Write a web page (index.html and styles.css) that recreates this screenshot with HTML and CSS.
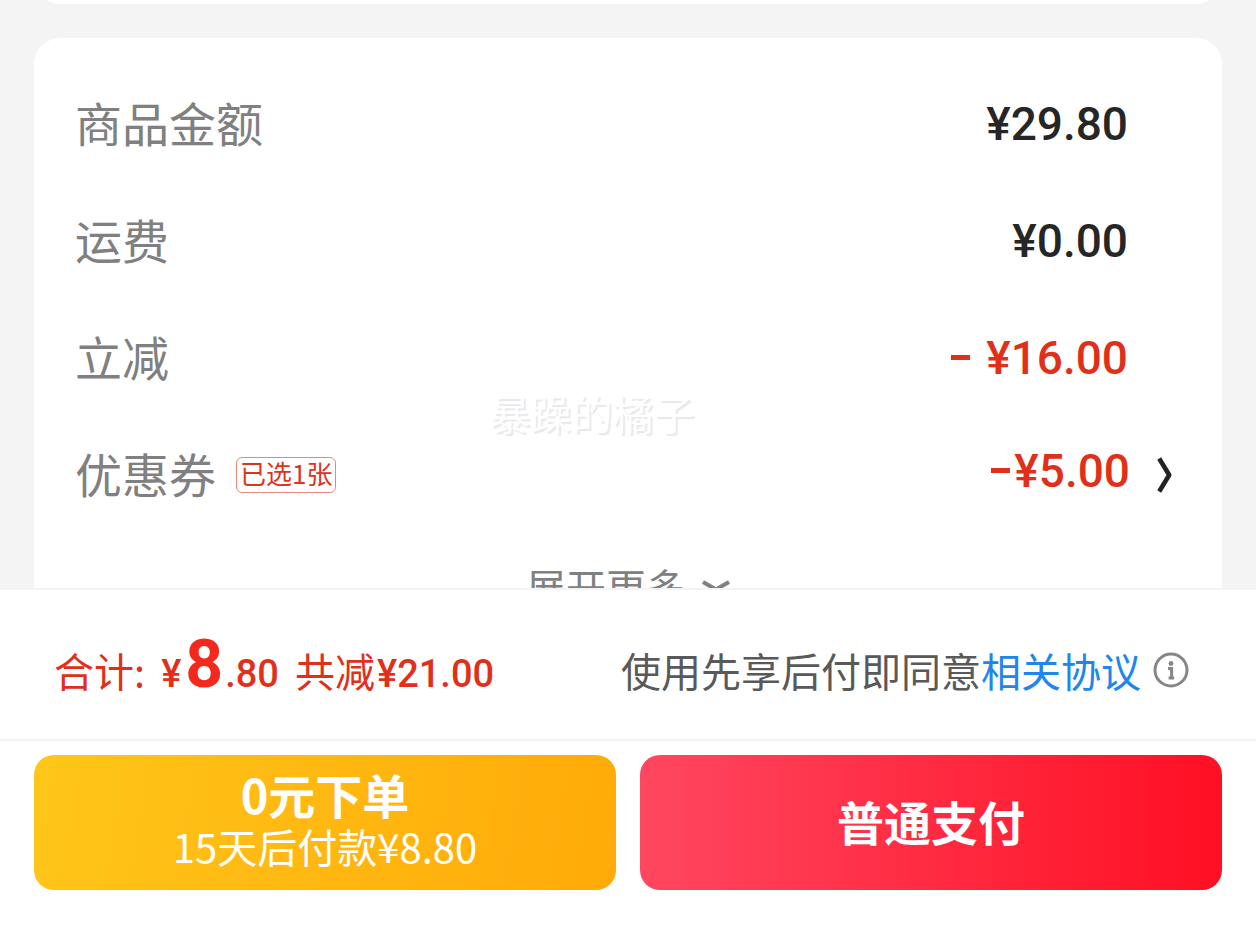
FILE: index.html
```
<!DOCTYPE html>
<html lang="zh-CN">
<head>
    <meta charset="UTF-8">
    <meta name="viewport" content="width=device-width, initial-scale=1.0">
    <title>确认订单</title>
    <link rel="stylesheet" href="styles.css">
</head>
<body>

    <main class="content">
        <div class="card card-prev"></div>

        <div class="card">
            <div class="row">
                <span class="label">商品金额</span>
                <span class="price">¥29.80</span>
            </div>
            <div class="row">
                <span class="label">运费</span>
                <span class="price">¥0.00</span>
            </div>
            <div class="row">
                <span class="label">立减</span>
                <span class="price red"><span class="minus"></span>¥16.00</span>
            </div>
            <div class="row coupon">
                <span class="label">优惠券</span>
                <span class="tag">已选1张</span>
                <span class="price red"><span class="minus"></span>¥5.00</span>
                <button type="button" class="arrow" aria-label="优惠券">
                    <svg width="16" height="36" viewBox="0 0 16 36" fill="none" stroke="#222" stroke-width="4.6" stroke-linejoin="round">
                        <path d="M2.2 1.5L12.2 18L2.2 34.5"/>
                    </svg>
                </button>
            </div>
            <button type="button" class="more">
                展开更多
                <svg width="28" height="16" viewBox="0 0 28 16" fill="none" stroke="#808080" stroke-width="4">
                    <path d="M1 4L14 11.5L27 4"/>
                </svg>
            </button>
            <span class="watermark">暴躁的橘子</span>
        </div>
    </main>

    <footer>
        <div class="summary">
            <p class="total">
                <span>合计:</span>
                <span class="amount">¥<b>8</b>.80</span>
                <span>共减<span class="num">¥21.00</span></span>
            </p>
            <p class="agree">
                使用先享后付即同意<a href="#">相关协议</a>
                <svg class="info" width="36" height="36" viewBox="0 0 36 36">
                    <circle cx="18" cy="18" r="16" fill="none" stroke="#868686" stroke-width="3"/>
                    <circle cx="18" cy="11.5" r="2.4" fill="#868686"/>
                    <path d="M15 16.4h3.6v10M15.6 26h5.6" fill="none" stroke="#868686" stroke-width="3"/>
                </svg>
            </p>
        </div>
        <div class="actions">
            <button type="button" class="btn later">
                <strong>0元下单</strong>
                <span>15天后付款¥8.80</span>
            </button>
            <button type="button" class="btn pay"><strong>普通支付</strong></button>
        </div>
    </footer>

</body>
</html>
```
FILE: styles.css
```
* {
    box-sizing: border-box;
}

body {
    margin: 0;
    height: 100vh;
    display: flex;
    flex-direction: column;
    overflow: hidden;
    background: #f4f4f4;
    font-family: "Noto Sans CJK SC", sans-serif;
    font-size: 40px;
}

button {
    border: none;
    padding: 0;
    background: none;
    font: inherit;
    cursor: pointer;
}

/* Order details */
.content {
    flex: 1;
    min-height: 0;
    overflow: hidden;
    padding: 0 34px;
}

.card {
    position: relative;
    background: #fff;
    border-radius: 26px;
    padding: 27px 41px 0;
}

/* only the bottom edge of the card above is in view */
.card-prev {
    height: 60px;
    margin: -56px 0 34px;
}

.row {
    display: flex;
    align-items: center;
    height: 117px;
    padding-right: 53px;
}

.label {
    padding-bottom: 4px;
    font-size: 47px;
    color: #808080;
}

.tag {
    margin-left: 20px;
    padding: 0 3px 4px;
    border: 1px solid #e8877a;
    border-radius: 6px;
    font-size: 26px;
    line-height: 30px;
    color: #d9361c;
}

.price {
    display: flex;
    align-items: center;
    margin-left: auto;
    font-family: Roboto, "Noto Sans CJK SC", sans-serif;
    font-size: 46px;
    font-weight: 500;
    color: #262626;
}

.red {
    color: #e1301a;
}

.minus {
    width: 19px;
    height: 5px;
    margin-right: 16px;
    background: #e1301a;
}

.coupon {
    padding-right: 8px;
}

.coupon .price {
    padding-bottom: 8px;
}

.coupon .minus {
    margin-right: 4px;
}

.arrow {
    width: 16px;
    height: 36px;
    margin-left: 27px;
}

.arrow svg {
    display: block;
}

.more {
    display: flex;
    align-items: center;
    justify-content: center;
    gap: 16px;
    width: 100%;
    height: 106px;
    color: #808080;
}

.watermark {
    position: absolute;
    top: 344px;
    left: 0;
    width: 100%;
    padding-right: 72px;
    text-align: center;
    font-size: 41px;
    line-height: 60px;
    color: #fff;
    text-shadow: 2px 2px 1px #e8e8ec;
    pointer-events: none;
}

/* Bottom bar */
footer {
    background: #fff;
    padding-bottom: 41px;
}

.summary {
    display: flex;
    align-items: center;
    justify-content: space-between;
    height: 153px;
    padding: 10px 67px 0 54px;
    border-top: 2px solid #f4f4f4;
    border-bottom: 2px solid #f4f4f4;
}

.total {
    display: flex;
    align-items: baseline;
    gap: 16px;
    margin: 0;
    line-height: 80px;
    color: #e1301a;
}

.amount,
.num {
    font-family: Roboto, "Noto Sans CJK SC", sans-serif;
    font-size: 38px;
    font-weight: 500;
}

.amount b {
    margin: 0 2px 0 4px;
    font-size: 66px;
    font-weight: 700;
    color: #f4281c;
}

.num {
    margin-left: 2px;
}

.agree {
    display: flex;
    align-items: center;
    margin: 0;
    color: #595959;
}

.agree a {
    color: #2186ec;
    text-decoration: none;
}

.info {
    margin-left: 12px;
}

.actions {
    display: flex;
    gap: 24px;
    padding: 14px 34px 0;
}

.btn {
    flex: 1;
    display: flex;
    flex-direction: column;
    align-items: center;
    justify-content: center;
    height: 135px;
    padding-bottom: 5px;
    border-radius: 20px;
    line-height: 53px;
    color: #fff;
}

.btn strong {
    font-size: 47px;
}

.later {
    background: linear-gradient(100deg, #ffc61a, #ffaa08);
}

.pay {
    background: linear-gradient(90deg, #ff4760, #ff0f23);
}
```
